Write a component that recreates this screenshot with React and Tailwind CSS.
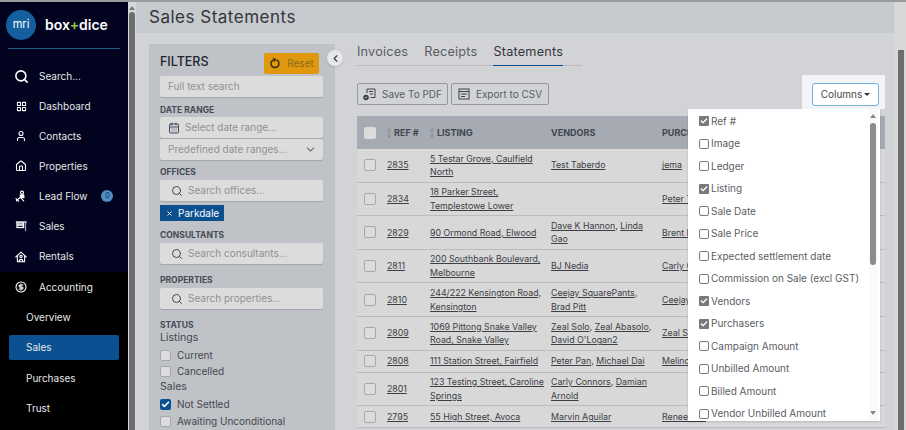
import React from 'react';
import { Search, LayoutGrid, User, Home, CircleDollarSign, ChevronLeft, ChevronDown, CalendarDays, Check, MoveVertical, X } from 'lucide-react';

const LeadIcon = () => (
    <svg width="12" height="12" viewBox="0 0 12 12" fill="none" stroke="white" strokeWidth="1.2" strokeLinecap="round" strokeLinejoin="round">
        <circle cx="7" cy="2.6" r="1.5" />
        <path d="M5.2 5.2 8.6 4.8 9 7.4 6 8.2Z" fill="white" />
        <path d="M1.5 10.8 5 7.4M1 8.6l2.6 2.6M6.5 8.6l2.2 2.2" />
    </svg>
);

const SaleSignIcon = () => (
    <svg width="12" height="12" viewBox="0 0 12 12" fill="none" strokeLinecap="square">
        <path d="M1.5 2h9.5" stroke="white" strokeWidth="1.3" />
        <path d="M10.5 2v8.5" stroke="#a9a4e0" strokeWidth="1.2" />
        <rect x="2" y="3" width="6.5" height="4.5" stroke="white" strokeWidth="1.3" fill="#01031f" />
        <path d="M3 5h4.5" stroke="white" strokeWidth="1.6" />
    </svg>
);

const RentalIcon = () => (
    <svg width="12" height="12" viewBox="0 0 12 12" fill="none" stroke="white" strokeWidth="1.1" strokeLinejoin="round" strokeLinecap="round">
        <path d="M.8 6 6 1.2 11.2 6" />
        <path d="M2.4 5.2v5.6h7.2V5.2" />
        <circle cx="6" cy="5.6" r="1.2" />
        <path d="M4.2 10.6c0-3 3.6-3 3.6 0" />
    </svg>
);

const PdfIcon = () => (
    <svg width="13" height="13" viewBox="0 0 13 13" fill="none" stroke="#3f4248" strokeWidth="1">
        <path d="M4 5V1h8v8.5H7.5" />
        <path d="M6 3.5h4M7 6h3" />
        <circle cx="3" cy="9.5" r="2.4" fill="#3f4248" />
        <circle cx="3" cy="9.5" r="0.8" fill="#d1d3d6" stroke="none" />
    </svg>
);

const ListIcon = () => (
    <svg width="12" height="12" viewBox="0 0 12 12" fill="none" stroke="#3f4248" strokeWidth="1">
        <rect x="1" y="1" width="10" height="10" />
        <path d="M1 3.5h10M3 6h6M3 8.5h4" />
    </svg>
);

const ResetIcon = () => (
    <svg width="12" height="12" viewBox="0 0 12 12" fill="none" stroke="#33280c" strokeWidth="1.4" strokeLinecap="round" className="mr-[6px]">
        <path d="M3.8 3.2A4 4 0 1 0 8.2 3.2" />
        <path d="M4.6 1.6 6.4 2.6 5 4" />
    </svg>
);

const navItems = [
    { label: 'Dashboard', icon: <LayoutGrid size={11} strokeWidth={2.2} className="text-white" /> },
    { label: 'Contacts', icon: <User size={12} strokeWidth={2.2} className="text-white" /> },
    { label: 'Properties', icon: <Home size={12} strokeWidth={2.2} className="text-white" /> },
    { label: 'Lead Flow', icon: <LeadIcon />, badge: '0' },
    { label: 'Sales', icon: <SaleSignIcon /> },
    { label: 'Rentals', icon: <RentalIcon /> },
];

const rows = [
    { ref: '2835', listing: ['5 Testar Grove, Caulfield North'], vendors: ['Test Taberdo'], buyers: 'jema', tall: true },
    { ref: '2834', listing: ['18 Parker Street, Templestowe Lower'], vendors: [], buyers: 'Peter Tan', tall: true },
    { ref: '2829', listing: ['90 Ormond Road, Elwood'], vendors: ['Dave K Hannon', 'Linda Gao'], buyers: 'Brent Lee', tall: true },
    { ref: '2811', listing: ['200 Southbank Boulevard, Melbourne'], vendors: ['BJ Nedia'], buyers: 'Carly Connors', tall: true },
    { ref: '2810', listing: ['244/222 Kensington Road, Kensington'], vendors: ['Ceejay SquarePants', 'Brad Pitt'], buyers: 'Ceejay SquarePants', tall: true },
    { ref: '2809', listing: ['1069 Pittong Snake Valley Road, Snake Valley'], vendors: ['Zeal Solo', 'Zeal Abasolo', "David O'Logan2"], buyers: 'Zeal Solo', tall: true },
    { ref: '2808', listing: ['111 Station Street, Fairfield'], vendors: ['Peter Pan', 'Michael Dai'], buyers: 'Melinda', tall: false },
    { ref: '2801', listing: ['123 Testing Street, Caroline Springs'], vendors: ['Carly Connors', 'Damian Arnold'], buyers: '', tall: true },
    { ref: '2795', listing: ['55 High Street, Avoca'], vendors: ['Marvin Aguilar'], buyers: 'Renee Lee', tall: false },
];

const columns = [
    ['Ref #', true],
    ['Image', false],
    ['Ledger', false],
    ['Listing', true],
    ['Sale Date', false],
    ['Sale Price', false],
    ['Expected settlement date', false],
    ['Commission on Sale (excl GST)', false],
    ['Vendors', true],
    ['Purchasers', true],
    ['Campaign Amount', false],
    ['Unbilled Amount', false],
    ['Billed Amount', false],
    ['Vendor Unbilled Amount', false],
];

const FilterInput = ({ text, icon }) => (
    <div className="flex items-center h-[21px] w-[163px] bg-[#dcdcdc] rounded-[2px] shadow-[0_1px_1px_rgba(0,0,0,0.15)] text-[10px] text-[#8f9195] pl-2 pr-1">
        {icon === 'search' && <Search size={12} strokeWidth={2} className="text-[#3f4550] ml-[3px] mr-[5px]" />}
        {icon === 'date' && <CalendarDays size={12} strokeWidth={2} className="text-[#3f4a63] mr-[5px]" />}
        <span className="truncate flex-1">{text}</span>
        {icon === 'chevron' && <ChevronDown size={13} className="text-[#6b6e74] mr-0.5" />}
    </div>
);

const FilterLabel = ({ children, className }) => (
    <div className={`text-[8.5px] font-bold leading-[11px] text-[#464b55] ${className}`}>{children}</div>
);

const StatusCheck = ({ label, checked }) => (
    <div className="flex items-center h-[16.4px] text-[10px] text-[#444850]">
        {checked ? (
            <span className="flex items-center justify-center w-[11px] h-[11px] rounded-[2px] bg-[#0b4f8f] mr-[6px]">
                <Check size={9} strokeWidth={4} className="text-white" />
            </span>
        ) : (
            <span className="w-[11px] h-[11px] rounded-[2px] bg-[#dcdcdc] border border-[#a5a7aa] mr-[6px]" />
        )}
        {label}
    </div>
);

const Links = ({ items }) => (
    <span>
        {items.map((item, i) => (
            <span key={item}>
                <span className="underline">{item}</span>
                {i < items.length - 1 && ', '}
            </span>
        ))}
    </span>
);

const Sidebar = () => (
    <div className="w-[128px] shrink-0 h-full flex flex-col bg-black text-[#e8e8e8] rounded-tl-[3px]">
        <div className="bg-[#01031f] h-[270px] shrink-0">
            <div className="h-[48px] mx-2 flex items-center border-b border-[#1c5f86] -mt-px">
                <div className="w-[30px] h-[30px] -ml-[2px] rounded-full bg-[#14609f] flex items-center justify-center text-[11px] text-white">mri</div>
                <div className="ml-[9px] text-[14px] font-semibold text-white">box<span className="text-[#9bc53d]">+</span>dice</div>
            </div>
            <div className="h-[30px] mt-[12px] flex items-center pl-[14px] text-[10px]">
                <Search size={15} strokeWidth={2.5} className="text-white" />
                <span className="ml-[10px]">Search...</span>
            </div>
            {navItems.map(({ label, icon, badge }) => (
                <div key={label} className="h-[30.1px] flex items-center text-[10px]">
                    <span className="w-[39px] flex justify-center pl-[3px]">{icon}</span>
                    <span>{label}</span>
                    {badge && <span className="ml-[14px] w-[12px] h-[12px] rounded-full bg-[#4f8ec4] text-[#0b2c52] text-[7px] flex items-center justify-center">{badge}</span>}
                </div>
            ))}
        </div>
        <div className="h-[30px] flex items-center text-[10px]">
            <span className="w-[39px] flex justify-center pl-[3px]"><CircleDollarSign size={12} strokeWidth={2.2} className="text-white" /></span>
            <span>Accounting</span>
        </div>
        <div className="h-[30px] flex items-center pl-[26px] text-[10px]">Overview</div>
        <div className="h-[25px] my-[3px] mx-[9px] pl-[17px] flex items-center bg-[#0b5090] rounded-[2px] text-[10px]">Sales</div>
        <div className="h-[30px] flex items-center pl-[26px] text-[10px]">Purchases</div>
        <div className="h-[30px] flex items-center pl-[26px] text-[10px]">Trust</div>
    </div>
);

const Filters = () => (
    <div className="w-[186px] shrink-0 bg-[#bfc2c7] pl-[11px] pt-[6px] overflow-hidden">
        <div className="flex items-center justify-between w-[159px] h-[26px]">
            <span className="text-[12.5px] font-medium text-[#20242b] -mt-[2px]">FILTERS</span>
            <button className="flex items-center justify-center w-[55px] h-[21px] bg-[#e0980f] rounded-[2px] text-[10px] text-[#8a6a20]">
                <ResetIcon />
                Reset
            </button>
        </div>
        <FilterInput text="Full text search" />
        <FilterLabel className="mt-[8px] mb-[1px]">DATE RANGE</FilterLabel>
        <FilterInput text="Select date range..." icon="date" />
        <div className="h-[1px]" />
        <FilterInput text="Predefined date ranges..." icon="chevron" />
        <FilterLabel className="mt-[7px] mb-[2px]">OFFICES</FilterLabel>
        <FilterInput text="Search offices..." icon="search" />
        <div className="flex items-center w-[64px] h-[16px] mt-[4px] bg-[#0b4f8f] text-[10px] text-white pl-[6px]">
            <X size={7} strokeWidth={3} className="mr-[5px]" />
            Parkdale
        </div>
        <FilterLabel className="mt-[9px] mb-[2px]">CONSULTANTS</FilterLabel>
        <FilterInput text="Search consultants..." icon="search" />
        <FilterLabel className="mt-[11px] mb-[2px]">PROPERTIES</FilterLabel>
        <FilterInput text="Search properties..." icon="search" />
        <FilterLabel className="mt-[11px]">STATUS</FilterLabel>
        <div className="text-[10.5px] leading-[14px] text-[#444850] mb-[2px]">Listings</div>
        <StatusCheck label="Current" />
        <StatusCheck label="Cancelled" />
        <div className="text-[10.5px] leading-[14px] text-[#444850] mb-[3px]">Sales</div>
        <StatusCheck label="Not Settled" checked />
        <StatusCheck label="Awaiting Unconditional" />
    </div>
);

const ROW_GRID = 'grid grid-cols-[30px_43px_121px_111px_1fr] items-center';

const Table = () => (
    <div className="mt-[11px] text-[8.8px] text-[#3c3f45]">
        <div className={`${ROW_GRID} h-[33px] bg-[#a6abb3] font-bold text-[9px] text-[#40454e]`}>
            <span className="ml-[7px] w-[12px] h-[12px] rounded-[2px] bg-[#dcdcdc]" />
            <span className="flex items-center"><MoveVertical size={10} strokeWidth={1.6} className="text-[#7b8088] -ml-[3px] mr-[0px]" />REF #</span>
            <span className="flex items-center"><MoveVertical size={10} strokeWidth={1.6} className="text-[#7b8088] -ml-[3px] mr-[0px]" />LISTING</span>
            <span>VENDORS</span>
            <span>PURCHASERS</span>
        </div>
        {rows.map((row) => (
            <div key={row.ref} className={`${ROW_GRID} ${row.tall ? 'h-[33.6px]' : 'h-[22px]'} bg-[#d8d8d8] border-b border-[#bcbdbf] leading-[13.7px]`}>
                <span className="ml-[7px] w-[12px] h-[12px] rounded-[2px] bg-[#dcdcdc] border border-[#a5a7aa]" />
                <span className="underline">{row.ref}</span>
                <span className="pr-[2px]"><Links items={row.listing} /></span>
                <span className="pr-[8px]"><Links items={row.vendors} /></span>
                <span className="underline whitespace-nowrap">{row.buyers}</span>
            </div>
        ))}
    </div>
);

const ColumnsMenu = () => (
    <>
        <div className="absolute left-[802px] top-[73px] w-[83px] h-[34px] bg-[#f2f4f7] flex items-end justify-end pr-[6px] pb-[3px]">
            <button className="flex items-center justify-center w-[67px] h-[23px] bg-white rounded-[3px] border border-[#6fb0e0] text-[10px] text-[#444850]">
                Columns
                <span className="ml-[2px] w-0 h-0 border-x-[3px] border-x-transparent border-t-[3px] border-t-[#333]" />
            </button>
        </div>
        <div className="absolute left-[688px] top-[107px] w-[192px] h-[312px] bg-white overflow-hidden flex shadow-[0_1px_2px_rgba(0,0,0,0.15)]">
            <div className="flex-1 pl-[11px] pt-[1px]">
                {columns.map(([label, checked]) => (
                    <div key={label} className="flex items-center h-[22.5px] text-[10px] text-[#5a5d63] whitespace-nowrap">
                        {checked ? (
                            <span className="flex items-center justify-center w-[10px] h-[10px] rounded-[1px] bg-[#77797c] mr-[2px]">
                                <Check size={8} strokeWidth={4} className="text-white" />
                            </span>
                        ) : (
                            <span className="w-[10px] h-[10px] rounded-[2px] border border-[#77797c] mr-[2px]" />
                        )}
                        {label}
                    </div>
                ))}
            </div>
            <div className="w-[9px] mr-[2.5px] h-full flex flex-col items-center bg-[#fafafa]">
                <span className="mt-[5px] w-0 h-0 border-x-[3.5px] border-x-transparent border-b-[4px] border-b-[#888]" />
                <span className="mt-[5px] w-[6px] h-[142px] rounded-[3px] bg-[#8c8c8c]" />
                <span className="mt-auto mb-[6px] w-0 h-0 border-x-[3.5px] border-x-transparent border-t-[4px] border-t-[#888]" />
            </div>
        </div>
    </>
);

const App = () => {
    return (
        <div className="relative w-[906px] h-[430px] overflow-hidden flex bg-[#d1d3d6] border-t-2 border-[#9a9a9a] font-['Inter',sans-serif]">
            <Sidebar />
            <div className="w-[8px] shrink-0 bg-[#d6d7d9] flex flex-col items-center">
                <span className="mt-[4px] w-0 h-0 border-x-[3px] border-x-transparent border-b-[4px] border-b-[#777]" />
                <span className="mt-[2px] w-[6px] flex-1 bg-[#6d6d6d] rounded-t-[3px]" />
            </div>
            <div className="flex-1 min-w-0 flex flex-col">
                <div className="h-[31px] shrink-0 bg-[#c6c9cd] pl-[13px] pt-[1px] flex items-center text-[17px] tracking-[0.5px] text-[#33363b]">Sales Statements</div>
                <div className="flex-1 min-h-0 flex pl-[13px] pt-[11px]">
                    <Filters />
                    <div className="relative w-[0px]">
                        <button className="absolute -left-[8px] top-[6px] w-[16px] h-[16px] rounded-full bg-[#e6e7e9] shadow-sm flex items-center justify-center">
                            <ChevronLeft size={11} strokeWidth={2.5} className="text-[#33363b]" />
                        </button>
                    </div>
                    <div className="w-[528px] ml-[22px] -mt-[2px] shrink-0">
                        <div className="flex gap-[16px] w-[225px] h-[24px] border-b border-[#b9bbbf] text-[12.7px] text-[#5a5d63] tracking-[0.2px]">
                            <span>Invoices</span>
                            <span>Receipts</span>
                            <span className="h-[24px] border-b-[1.5px] border-[#0b4f8f] text-[#33363b]">Statements</span>
                        </div>
                        <div className="flex gap-[3px] mt-[17px] text-[10px] text-[#5a5d63]">
                            <button className="flex items-center justify-center w-[91px] h-[22px] border border-[#96989c] rounded-[2px]">
                                <span className="mr-[6px]"><PdfIcon /></span>Save To PDF
                            </button>
                            <button className="flex items-center justify-center w-[98px] h-[22px] border border-[#96989c] rounded-[2px]">
                                <span className="mr-[6px]"><ListIcon /></span>Export to CSV
                            </button>
                        </div>
                        <Table />
                    </div>
                </div>
            </div>
            <div className="w-[12px] shrink-0 bg-[#d6d7d9] flex justify-end pr-[2px]">
                <span className="mt-[48px] w-[6px] bg-[#6d6d6d]" />
            </div>
            <ColumnsMenu />
        </div>
    );
};

export default App;
